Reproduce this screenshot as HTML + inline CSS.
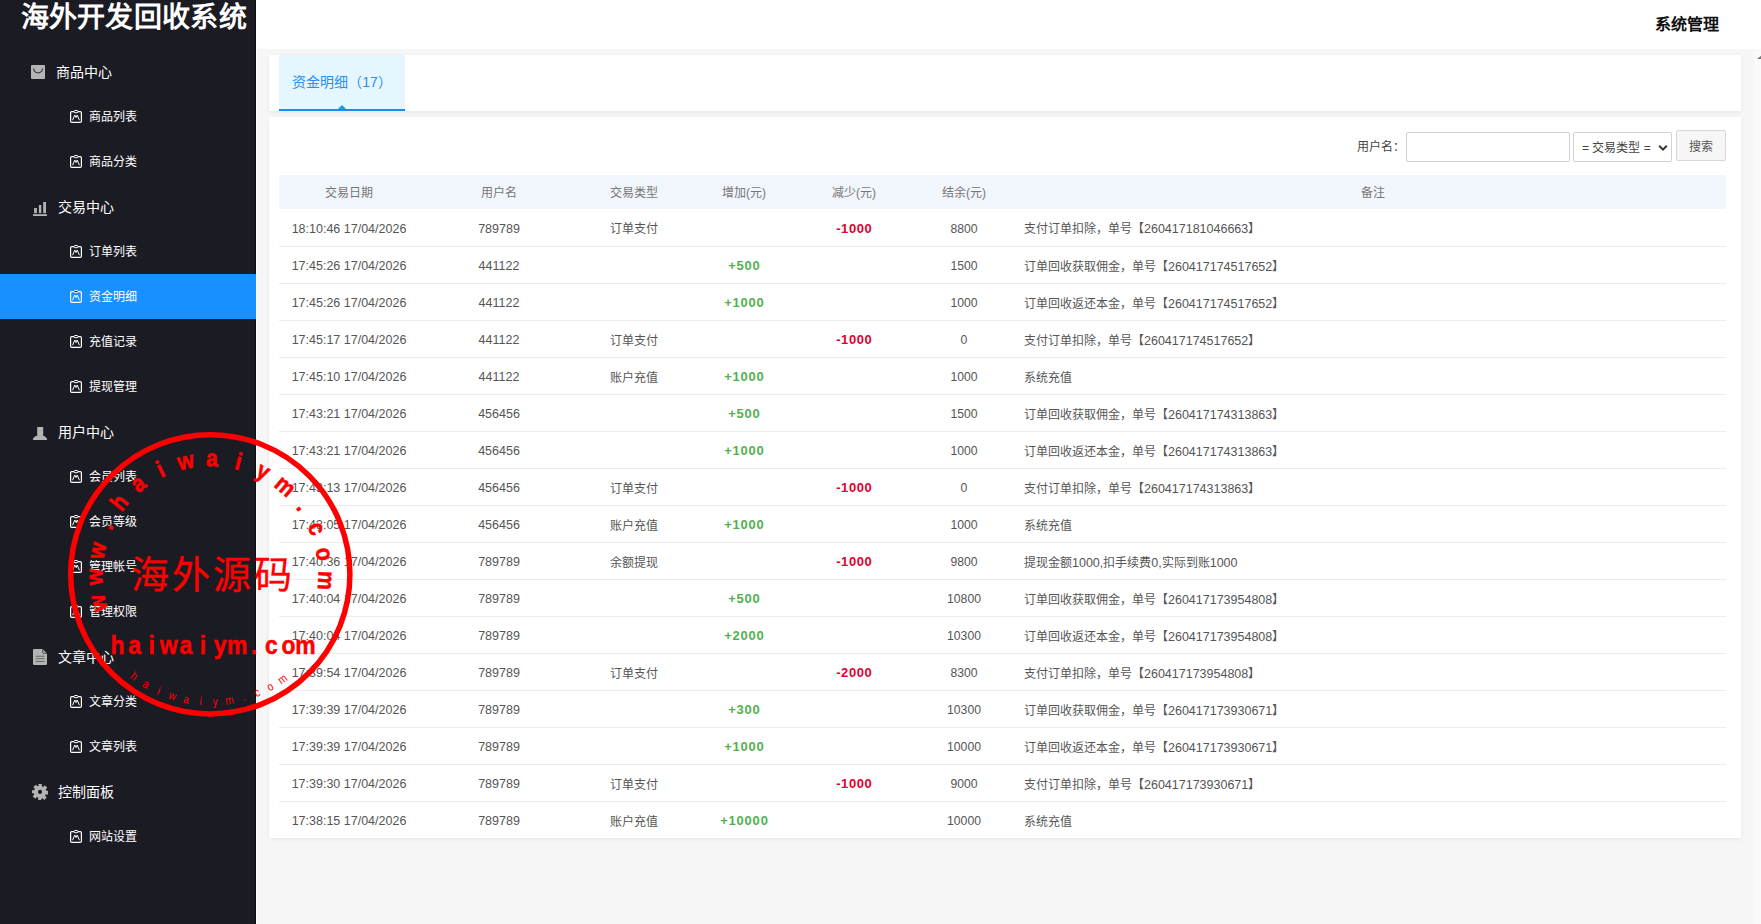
<!DOCTYPE html>
<html lang="zh-CN"><head><meta charset="utf-8">
<style>
*{box-sizing:border-box;margin:0;padding:0}
html,body{width:1761px;height:924px;overflow:hidden;background:#f6f6f6;font-family:"Liberation Sans",sans-serif}
#side{position:absolute;left:0;top:0;width:256px;height:924px;background:#1b1b24;border-right:1px solid #0e0e16}
#wcol{position:absolute;left:256px;top:49px;width:1px;height:875px;background:#fff}
#side .logo{position:absolute;left:20.5px;top:0px;height:40px;line-height:36px;color:#fff;font-size:28px;letter-spacing:0.3px;font-weight:900;white-space:nowrap}
#menu{position:absolute;left:0;top:49px;width:256px}
.mi{height:45px;position:relative;color:#fff;white-space:nowrap}
.mi.act{background:#1890ff}
.pi{position:absolute}
.pt{position:absolute;left:56px;top:1px;line-height:45px;font-size:14px;font-weight:500}
.ci{position:absolute;left:70px;top:16px}
.ct{position:absolute;left:89px;top:1px;line-height:45px;font-size:12px;font-weight:500}
#top{position:absolute;left:256px;top:0;width:1505px;height:49px;background:#fff}
#top .sys{position:absolute;right:42px;top:1px;line-height:48px;font-size:16px;font-weight:bold;color:#111}
#scroll{position:absolute;left:1754px;top:49px;width:7px;height:875px;background:#fafafa}
#scroll:after{content:"";position:absolute;left:3px;top:6px;border-left:5px solid transparent;border-right:5px solid transparent;border-bottom:4.5px solid #777}
#card1{position:absolute;left:269px;top:55px;width:1472px;height:56px;background:#fff;box-shadow:0 1px 4px rgba(0,0,0,.07)}
.tab{position:absolute;left:10px;top:0;width:126px;height:56px;background:#e6f6fe;border-bottom:2px solid #1a8cf0;color:#2b8ef0;font-size:14px;line-height:54px;text-align:center}
.tab:after{content:"";position:absolute;left:59px;bottom:0;border-left:4px solid transparent;border-right:4px solid transparent;border-bottom:4.5px solid #1a9ad6}
#card2{position:absolute;left:269px;top:117px;width:1472px;height:721px;background:#fff;box-shadow:0 1px 4px rgba(0,0,0,.07)}
.form{position:absolute;right:15px;top:13px;height:32px;font-size:12px;color:#444}
.form .lb{position:absolute;right:321px;top:1px;line-height:32px;white-space:nowrap}
.form .in{position:absolute;right:156px;top:2px;width:164px;height:30px;border:1px solid #d2d2d2;border-radius:2px;background:#fff}
.form .sel{position:absolute;right:54px;top:2px;width:99px;height:30px;border:1px solid #d2d2d2;border-radius:2px;background:#fff;line-height:30px;padding-left:8px;white-space:nowrap;color:#444}
.form .sel svg{position:absolute;right:3px;top:11px}
.form .btn{position:absolute;right:0;top:0;width:50px;height:31px;border:1px solid #d8d8d8;border-radius:2px;background:#f6f6f6;line-height:32px;text-align:center;color:#555}
table{position:absolute;left:10px;top:58px;width:1447px;border-collapse:collapse;table-layout:fixed;font-size:12px;color:#555}
th{height:34px;padding-bottom:2px;background:#f1f5fc;font-weight:normal;color:#777;text-align:center}
td{height:37px;padding-top:1px;text-align:center;border-bottom:1px solid #ececec;white-space:nowrap}
td.n{text-align:left;padding-left:5px}
td.g{padding-top:2px;color:#52b152;font-weight:bold;font-size:13px;letter-spacing:0.8px;text-indent:0.8px}
td.r{padding-top:2px;color:#df0030;font-weight:bold;font-size:13px;letter-spacing:0.6px;text-indent:0.6px}
.d{font-size:12.5px;position:relative;top:1px}
.n .d{top:0}
.b .d{font-size:12.2px}
</style></head><body>
<div id="side">
<div class="logo">海外开发回收系统</div>
<div id="menu">
<div class="mi p"><svg class="pi" style="left:31px;top:16px" width="14" height="14" viewBox="0 0 14 14"><rect x="0" y="0" width="14" height="14" rx="1" fill="#b4b4b4"/><path d="M2.7 3.6 A4.4 4.4 0 0 0 11.5 3.6" stroke="#2c2c33" stroke-width="1.15" fill="none"/></svg><span class="pt" style="left:56px">商品中心</span></div>
<div class="mi c"><svg class="ci" width="12" height="13" viewBox="0 0 12 13"><rect x="0.6" y="1.6" width="10.8" height="10.8" rx="1.2" fill="none" stroke="#fff" stroke-width="1.2"/><ellipse cx="6" cy="1.6" rx="2.1" ry="1.2" fill="#1b1b24" stroke="#fff" stroke-width="1"/><path d="M2.6 10.2 L4.8 5 L6.2 7.6 L7.2 5 L9.4 10.2" stroke="#fff" stroke-width="1" fill="none"/></svg><span class="ct">商品列表</span></div>
<div class="mi c"><svg class="ci" width="12" height="13" viewBox="0 0 12 13"><rect x="0.6" y="1.6" width="10.8" height="10.8" rx="1.2" fill="none" stroke="#fff" stroke-width="1.2"/><ellipse cx="6" cy="1.6" rx="2.1" ry="1.2" fill="#1b1b24" stroke="#fff" stroke-width="1"/><path d="M2.6 10.2 L4.8 5 L6.2 7.6 L7.2 5 L9.4 10.2" stroke="#fff" stroke-width="1" fill="none"/></svg><span class="ct">商品分类</span></div>
<div class="mi p"><svg class="pi" style="left:33px;top:18px" width="14" height="14" viewBox="0 0 14 14"><rect x="1.1" y="6" width="2.8" height="5.2" fill="#b4b4b4"/><rect x="5.9" y="3" width="2.4" height="8.2" fill="#b4b4b4"/><rect x="10.2" y="0" width="2.8" height="11.2" fill="#b4b4b4"/><rect x="0" y="12.2" width="14" height="1.8" fill="#b4b4b4"/></svg><span class="pt" style="left:58px">交易中心</span></div>
<div class="mi c"><svg class="ci" width="12" height="13" viewBox="0 0 12 13"><rect x="0.6" y="1.6" width="10.8" height="10.8" rx="1.2" fill="none" stroke="#fff" stroke-width="1.2"/><ellipse cx="6" cy="1.6" rx="2.1" ry="1.2" fill="#1b1b24" stroke="#fff" stroke-width="1"/><path d="M2.6 10.2 L4.8 5 L6.2 7.6 L7.2 5 L9.4 10.2" stroke="#fff" stroke-width="1" fill="none"/></svg><span class="ct">订单列表</span></div>
<div class="mi c act"><svg class="ci" width="12" height="13" viewBox="0 0 12 13"><rect x="0.6" y="1.6" width="10.8" height="10.8" rx="1.2" fill="none" stroke="#fff" stroke-width="1.2"/><ellipse cx="6" cy="1.6" rx="2.1" ry="1.2" fill="#1b1b24" stroke="#fff" stroke-width="1"/><path d="M2.6 10.2 L4.8 5 L6.2 7.6 L7.2 5 L9.4 10.2" stroke="#fff" stroke-width="1" fill="none"/></svg><span class="ct">资金明细</span></div>
<div class="mi c"><svg class="ci" width="12" height="13" viewBox="0 0 12 13"><rect x="0.6" y="1.6" width="10.8" height="10.8" rx="1.2" fill="none" stroke="#fff" stroke-width="1.2"/><ellipse cx="6" cy="1.6" rx="2.1" ry="1.2" fill="#1b1b24" stroke="#fff" stroke-width="1"/><path d="M2.6 10.2 L4.8 5 L6.2 7.6 L7.2 5 L9.4 10.2" stroke="#fff" stroke-width="1" fill="none"/></svg><span class="ct">充值记录</span></div>
<div class="mi c"><svg class="ci" width="12" height="13" viewBox="0 0 12 13"><rect x="0.6" y="1.6" width="10.8" height="10.8" rx="1.2" fill="none" stroke="#fff" stroke-width="1.2"/><ellipse cx="6" cy="1.6" rx="2.1" ry="1.2" fill="#1b1b24" stroke="#fff" stroke-width="1"/><path d="M2.6 10.2 L4.8 5 L6.2 7.6 L7.2 5 L9.4 10.2" stroke="#fff" stroke-width="1" fill="none"/></svg><span class="ct">提现管理</span></div>
<div class="mi p"><svg class="pi" style="left:33px;top:18px" width="14" height="13" viewBox="0 0 14 13"><path d="M4.2 0 H10.2 V9 H11.5 L14 11.5 V13 H0 V11.5 L2.5 9 H4.2 Z" fill="#b4b4b4"/></svg><span class="pt" style="left:58px">用户中心</span></div>
<div class="mi c"><svg class="ci" width="12" height="13" viewBox="0 0 12 13"><rect x="0.6" y="1.6" width="10.8" height="10.8" rx="1.2" fill="none" stroke="#fff" stroke-width="1.2"/><ellipse cx="6" cy="1.6" rx="2.1" ry="1.2" fill="#1b1b24" stroke="#fff" stroke-width="1"/><path d="M2.6 10.2 L4.8 5 L6.2 7.6 L7.2 5 L9.4 10.2" stroke="#fff" stroke-width="1" fill="none"/></svg><span class="ct">会员列表</span></div>
<div class="mi c"><svg class="ci" width="12" height="13" viewBox="0 0 12 13"><rect x="0.6" y="1.6" width="10.8" height="10.8" rx="1.2" fill="none" stroke="#fff" stroke-width="1.2"/><ellipse cx="6" cy="1.6" rx="2.1" ry="1.2" fill="#1b1b24" stroke="#fff" stroke-width="1"/><path d="M2.6 10.2 L4.8 5 L6.2 7.6 L7.2 5 L9.4 10.2" stroke="#fff" stroke-width="1" fill="none"/></svg><span class="ct">会员等级</span></div>
<div class="mi c"><svg class="ci" width="12" height="13" viewBox="0 0 12 13"><rect x="0.6" y="1.6" width="10.8" height="10.8" rx="1.2" fill="none" stroke="#fff" stroke-width="1.2"/><ellipse cx="6" cy="1.6" rx="2.1" ry="1.2" fill="#1b1b24" stroke="#fff" stroke-width="1"/><path d="M2.6 10.2 L4.8 5 L6.2 7.6 L7.2 5 L9.4 10.2" stroke="#fff" stroke-width="1" fill="none"/></svg><span class="ct">管理帐号</span></div>
<div class="mi c"><svg class="ci" width="12" height="13" viewBox="0 0 12 13"><rect x="0.6" y="1.6" width="10.8" height="10.8" rx="1.2" fill="none" stroke="#fff" stroke-width="1.2"/><ellipse cx="6" cy="1.6" rx="2.1" ry="1.2" fill="#1b1b24" stroke="#fff" stroke-width="1"/><path d="M2.6 10.2 L4.8 5 L6.2 7.6 L7.2 5 L9.4 10.2" stroke="#fff" stroke-width="1" fill="none"/></svg><span class="ct">管理权限</span></div>
<div class="mi p"><svg class="pi" style="left:33px;top:15px" width="14" height="16" viewBox="0 0 14 16"><path d="M1.2 0 H9.5 L14 4.5 V14.8 Q14 16 12.8 16 H1.2 Q0 16 0 14.8 V1.2 Q0 0 1.2 0 Z" fill="#b4b4b4"/><path d="M9.6 0.3 V3 Q9.6 4.4 11 4.4 H13.7" stroke="#444" stroke-width="0.9" fill="none"/><path d="M2.7 7.2H11.6M2.7 9.8H11.6M2.7 12.5H11.6" stroke="#6a6a6a" stroke-width="1.1"/></svg><span class="pt" style="left:58px">文章中心</span></div>
<div class="mi c"><svg class="ci" width="12" height="13" viewBox="0 0 12 13"><rect x="0.6" y="1.6" width="10.8" height="10.8" rx="1.2" fill="none" stroke="#fff" stroke-width="1.2"/><ellipse cx="6" cy="1.6" rx="2.1" ry="1.2" fill="#1b1b24" stroke="#fff" stroke-width="1"/><path d="M2.6 10.2 L4.8 5 L6.2 7.6 L7.2 5 L9.4 10.2" stroke="#fff" stroke-width="1" fill="none"/></svg><span class="ct">文章分类</span></div>
<div class="mi c"><svg class="ci" width="12" height="13" viewBox="0 0 12 13"><rect x="0.6" y="1.6" width="10.8" height="10.8" rx="1.2" fill="none" stroke="#fff" stroke-width="1.2"/><ellipse cx="6" cy="1.6" rx="2.1" ry="1.2" fill="#1b1b24" stroke="#fff" stroke-width="1"/><path d="M2.6 10.2 L4.8 5 L6.2 7.6 L7.2 5 L9.4 10.2" stroke="#fff" stroke-width="1" fill="none"/></svg><span class="ct">文章列表</span></div>
<div class="mi p"><svg class="pi" style="left:32px;top:15px" width="16" height="16" viewBox="0 0 16 16"><path d="M6.2 0h3.6v2.3l1.4.6 1.6-1.6 2.5 2.5-1.6 1.6.6 1.4H16v3.6h-2.3l-.6 1.4 1.6 1.6-2.5 2.5-1.6-1.6-1.4.6V16H6.2v-2.3l-1.4-.6-1.6 1.6-2.5-2.5 1.6-1.6-.6-1.4H0V6.2h2.3l.6-1.4L1.3 3.2l2.5-2.5 1.6 1.6 1.4-.6z" fill="#b4b4b4"/><circle cx="8" cy="7.9" r="2.1" fill="#1b1b24"/></svg><span class="pt" style="left:58px">控制面板</span></div>
<div class="mi c"><svg class="ci" width="12" height="13" viewBox="0 0 12 13"><rect x="0.6" y="1.6" width="10.8" height="10.8" rx="1.2" fill="none" stroke="#fff" stroke-width="1.2"/><ellipse cx="6" cy="1.6" rx="2.1" ry="1.2" fill="#1b1b24" stroke="#fff" stroke-width="1"/><path d="M2.6 10.2 L4.8 5 L6.2 7.6 L7.2 5 L9.4 10.2" stroke="#fff" stroke-width="1" fill="none"/></svg><span class="ct">网站设置</span></div>
</div>
</div>
<div id="wcol"></div>
<div id="top"><div class="sys">系统管理</div></div>
<div id="scroll"></div>
<div id="card1"><div class="tab">资金明细（17）</div></div>
<div id="card2">
<div class="form"><span class="lb">用户名：</span><div class="in"></div><div class="sel">= 交易类型 =<svg width="10" height="8" viewBox="0 0 10 8"><path d="M1.2 1.8 L5 5.6 L8.8 1.8" stroke="#333" stroke-width="2" fill="none"/></svg></div><div class="btn">搜索</div></div>
<table>
<colgroup><col style="width:140px"><col style="width:160px"><col style="width:110px"><col style="width:110px"><col style="width:110px"><col style="width:110px"><col></colgroup>
<thead><tr><th>交易日期</th><th>用户名</th><th>交易类型</th><th>增加(元)</th><th>减少(元)</th><th>结余(元)</th><th>备注</th></tr></thead>
<tbody>
<tr><td><span class="d">18:10:46 17/04/2026</span></td><td><span class="d">789789</span></td><td>订单支付</td><td class="g"></td><td class="r">-1000</td><td class="b"><span class="d">8800</span></td><td class="n">支付订单扣除，单号【<span class="d">260417181046663</span>】</td></tr>
<tr><td><span class="d">17:45:26 17/04/2026</span></td><td><span class="d">441122</span></td><td></td><td class="g">+500</td><td class="r"></td><td class="b"><span class="d">1500</span></td><td class="n">订单回收获取佣金，单号【<span class="d">260417174517652</span>】</td></tr>
<tr><td><span class="d">17:45:26 17/04/2026</span></td><td><span class="d">441122</span></td><td></td><td class="g">+1000</td><td class="r"></td><td class="b"><span class="d">1000</span></td><td class="n">订单回收返还本金，单号【<span class="d">260417174517652</span>】</td></tr>
<tr><td><span class="d">17:45:17 17/04/2026</span></td><td><span class="d">441122</span></td><td>订单支付</td><td class="g"></td><td class="r">-1000</td><td class="b"><span class="d">0</span></td><td class="n">支付订单扣除，单号【<span class="d">260417174517652</span>】</td></tr>
<tr><td><span class="d">17:45:10 17/04/2026</span></td><td><span class="d">441122</span></td><td>账户充值</td><td class="g">+1000</td><td class="r"></td><td class="b"><span class="d">1000</span></td><td class="n">系统充值</td></tr>
<tr><td><span class="d">17:43:21 17/04/2026</span></td><td><span class="d">456456</span></td><td></td><td class="g">+500</td><td class="r"></td><td class="b"><span class="d">1500</span></td><td class="n">订单回收获取佣金，单号【<span class="d">260417174313863</span>】</td></tr>
<tr><td><span class="d">17:43:21 17/04/2026</span></td><td><span class="d">456456</span></td><td></td><td class="g">+1000</td><td class="r"></td><td class="b"><span class="d">1000</span></td><td class="n">订单回收返还本金，单号【<span class="d">260417174313863</span>】</td></tr>
<tr><td><span class="d">17:43:13 17/04/2026</span></td><td><span class="d">456456</span></td><td>订单支付</td><td class="g"></td><td class="r">-1000</td><td class="b"><span class="d">0</span></td><td class="n">支付订单扣除，单号【<span class="d">260417174313863</span>】</td></tr>
<tr><td><span class="d">17:43:05 17/04/2026</span></td><td><span class="d">456456</span></td><td>账户充值</td><td class="g">+1000</td><td class="r"></td><td class="b"><span class="d">1000</span></td><td class="n">系统充值</td></tr>
<tr><td><span class="d">17:40:36 17/04/2026</span></td><td><span class="d">789789</span></td><td>余额提现</td><td class="g"></td><td class="r">-1000</td><td class="b"><span class="d">9800</span></td><td class="n">提现金额<span class="d">1000,</span>扣手续费<span class="d">0,</span>实际到账<span class="d">1000</span></td></tr>
<tr><td><span class="d">17:40:04 17/04/2026</span></td><td><span class="d">789789</span></td><td></td><td class="g">+500</td><td class="r"></td><td class="b"><span class="d">10800</span></td><td class="n">订单回收获取佣金，单号【<span class="d">260417173954808</span>】</td></tr>
<tr><td><span class="d">17:40:04 17/04/2026</span></td><td><span class="d">789789</span></td><td></td><td class="g">+2000</td><td class="r"></td><td class="b"><span class="d">10300</span></td><td class="n">订单回收返还本金，单号【<span class="d">260417173954808</span>】</td></tr>
<tr><td><span class="d">17:39:54 17/04/2026</span></td><td><span class="d">789789</span></td><td>订单支付</td><td class="g"></td><td class="r">-2000</td><td class="b"><span class="d">8300</span></td><td class="n">支付订单扣除，单号【<span class="d">260417173954808</span>】</td></tr>
<tr><td><span class="d">17:39:39 17/04/2026</span></td><td><span class="d">789789</span></td><td></td><td class="g">+300</td><td class="r"></td><td class="b"><span class="d">10300</span></td><td class="n">订单回收获取佣金，单号【<span class="d">260417173930671</span>】</td></tr>
<tr><td><span class="d">17:39:39 17/04/2026</span></td><td><span class="d">789789</span></td><td></td><td class="g">+1000</td><td class="r"></td><td class="b"><span class="d">10000</span></td><td class="n">订单回收返还本金，单号【<span class="d">260417173930671</span>】</td></tr>
<tr><td><span class="d">17:39:30 17/04/2026</span></td><td><span class="d">789789</span></td><td>订单支付</td><td class="g"></td><td class="r">-1000</td><td class="b"><span class="d">9000</span></td><td class="n">支付订单扣除，单号【<span class="d">260417173930671</span>】</td></tr>
<tr><td><span class="d">17:38:15 17/04/2026</span></td><td><span class="d">789789</span></td><td>账户充值</td><td class="g">+10000</td><td class="r"></td><td class="b"><span class="d">10000</span></td><td class="n">系统充值</td></tr>
</tbody>
</table>
</div>
<svg id="stamp" width="1761" height="924" viewBox="0 0 1761 924" style="position:absolute;left:0;top:0;pointer-events:none" fill="#ff0000" font-family="Liberation Sans, sans-serif"><circle cx="210.3" cy="574.3" r="139.6" fill="none" stroke="#ff0000" stroke-width="5.5"/><text transform="translate(105.74,601.34) rotate(255.50) scale(0.88,1)" text-anchor="middle" font-size="24" font-weight="bold" stroke="#ff0000" stroke-width="0.6">w</text><text transform="translate(102.33,576.81) rotate(268.67) scale(0.88,1)" text-anchor="middle" font-size="24" font-weight="bold" stroke="#ff0000" stroke-width="0.6">w</text><text transform="translate(104.60,552.14) rotate(281.84) scale(0.88,1)" text-anchor="middle" font-size="24" font-weight="bold" stroke="#ff0000" stroke-width="0.6">w</text><text transform="translate(112.43,528.64) rotate(295.01) scale(0.88,1)" text-anchor="middle" font-size="24" font-weight="bold" stroke="#ff0000" stroke-width="0.6">.</text><text transform="translate(125.40,507.54) rotate(308.18) scale(0.88,1)" text-anchor="middle" font-size="24" font-weight="bold" stroke="#ff0000" stroke-width="0.6">h</text><text transform="translate(142.85,489.95) rotate(321.35) scale(0.88,1)" text-anchor="middle" font-size="24" font-weight="bold" stroke="#ff0000" stroke-width="0.6">a</text><text transform="translate(163.84,476.80) rotate(334.52) scale(0.88,1)" text-anchor="middle" font-size="24" font-weight="bold" stroke="#ff0000" stroke-width="0.6">i</text><text transform="translate(187.27,468.78) rotate(347.69) scale(0.88,1)" text-anchor="middle" font-size="24" font-weight="bold" stroke="#ff0000" stroke-width="0.6">w</text><text transform="translate(211.92,466.31) rotate(360.86) scale(0.88,1)" text-anchor="middle" font-size="24" font-weight="bold" stroke="#ff0000" stroke-width="0.6">a</text><text transform="translate(236.48,469.52) rotate(374.03) scale(0.88,1)" text-anchor="middle" font-size="24" font-weight="bold" stroke="#ff0000" stroke-width="0.6">i</text><text transform="translate(259.67,478.24) rotate(387.20) scale(0.88,1)" text-anchor="middle" font-size="24" font-weight="bold" stroke="#ff0000" stroke-width="0.6">y</text><text transform="translate(280.25,492.02) rotate(400.37) scale(0.88,1)" text-anchor="middle" font-size="24" font-weight="bold" stroke="#ff0000" stroke-width="0.6">m</text><text transform="translate(297.16,510.12) rotate(413.54) scale(0.88,1)" text-anchor="middle" font-size="24" font-weight="bold" stroke="#ff0000" stroke-width="0.6">.</text><text transform="translate(309.50,531.60) rotate(426.71) scale(0.88,1)" text-anchor="middle" font-size="24" font-weight="bold" stroke="#ff0000" stroke-width="0.6">c</text><text transform="translate(316.62,555.32) rotate(439.88) scale(0.88,1)" text-anchor="middle" font-size="24" font-weight="bold" stroke="#ff0000" stroke-width="0.6">o</text><text transform="translate(318.15,580.05) rotate(453.05) scale(0.88,1)" text-anchor="middle" font-size="24" font-weight="bold" stroke="#ff0000" stroke-width="0.6">m</text><text transform="translate(133.62,676.79) rotate(36.80) scale(0.85,1)" y="3.2" text-anchor="middle" font-size="12">h</text><text transform="translate(145.70,684.80) rotate(30.31) scale(0.85,1)" y="3.2" text-anchor="middle" font-size="12">a</text><text transform="translate(158.61,691.40) rotate(23.82) scale(0.85,1)" y="3.2" text-anchor="middle" font-size="12">i</text><text transform="translate(172.17,696.49) rotate(17.33) scale(0.85,1)" y="3.2" text-anchor="middle" font-size="12">w</text><text transform="translate(186.23,700.02) rotate(10.84) scale(0.85,1)" y="3.2" text-anchor="middle" font-size="12">a</text><text transform="translate(200.59,701.93) rotate(4.35) scale(0.85,1)" y="3.2" text-anchor="middle" font-size="12">i</text><text transform="translate(215.08,702.21) rotate(-2.14) scale(0.85,1)" y="3.2" text-anchor="middle" font-size="12">y</text><text transform="translate(229.51,700.85) rotate(-8.63) scale(0.85,1)" y="3.2" text-anchor="middle" font-size="12">m</text><text transform="translate(243.69,697.87) rotate(-15.12) scale(0.85,1)" y="3.2" text-anchor="middle" font-size="12">.</text><text transform="translate(257.44,693.30) rotate(-21.61) scale(0.85,1)" y="3.2" text-anchor="middle" font-size="12">c</text><text transform="translate(270.59,687.21) rotate(-28.10) scale(0.85,1)" y="3.2" text-anchor="middle" font-size="12">o</text><text transform="translate(282.97,679.67) rotate(-34.59) scale(0.85,1)" y="3.2" text-anchor="middle" font-size="12">m</text><text transform="scale(0.88,1)" x="133.41 152.84 172.27 191.70 211.14 230.57 250.00 269.43 288.86 308.30 327.73 347.16" y="654" text-anchor="middle" font-size="26" font-weight="bold" stroke="#ff0000" stroke-width="0.5">haiwaiym.com</text><text x="150.0 191.0 232.0 273.0" y="588" text-anchor="middle" font-size="38" stroke="#ff0000" stroke-width="0.3" font-family="Liberation Serif, serif">海外源码</text></svg>
</body></html>
